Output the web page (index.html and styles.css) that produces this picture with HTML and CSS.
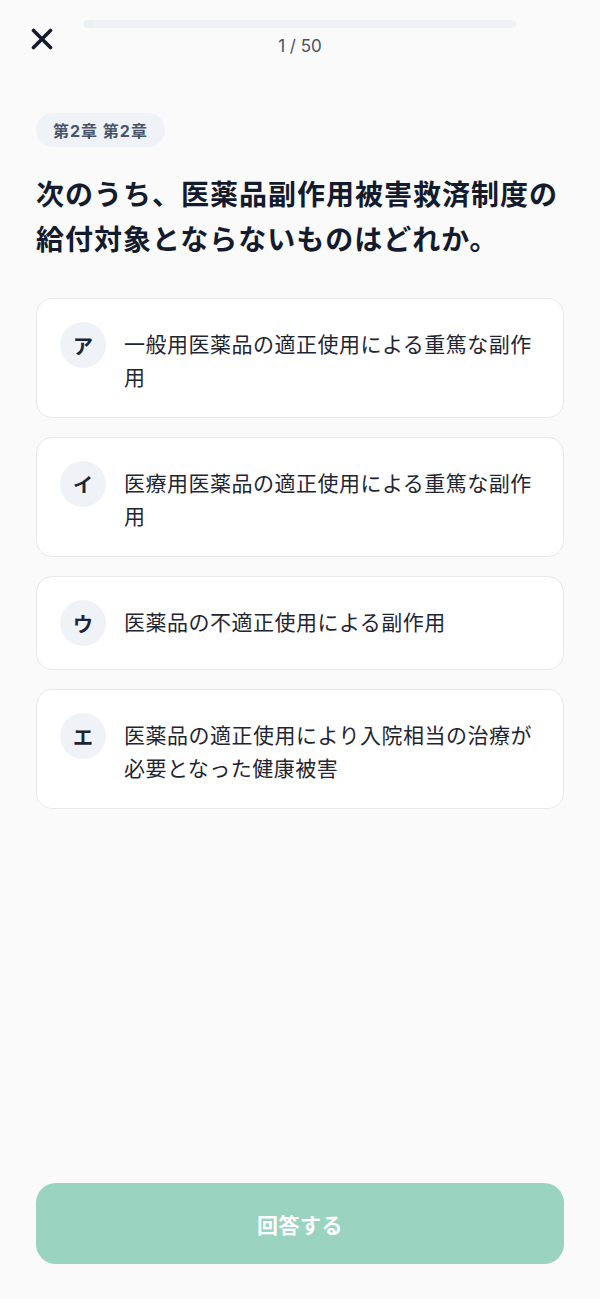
FILE: index.html
```html
<!DOCTYPE html>
<html lang="ja">
<head>
<meta charset="utf-8">
<meta name="viewport" content="width=device-width, initial-scale=1">
<title>Quiz</title>
<link rel="stylesheet" href="styles.css">
</head>
<body>
<div class="screen">
  <header class="topbar">
    <button class="close" aria-label="閉じる">
      <svg width="22" height="22" viewBox="0 0 22 22" aria-hidden="true">
        <path d="M2.5 2.5 L19.5 19.5 M19.5 2.5 L2.5 19.5" stroke="#141a2e" stroke-width="3.6" stroke-linecap="round" fill="none"/>
      </svg>
    </button>
    <div class="progress">
      <div class="track"><div class="fill" style="width:2%"></div></div>
      <div class="count">1 / 50</div>
    </div>
    <div class="spacer"></div>
  </header>

  <main class="content">
    <span class="chip">第2章 第2章</span>
    <h1 class="question">次のうち、医薬品副作用被害救済制度の給付対象とならないものはどれか。</h1>

    <ul class="options">
      <li class="option">
        <span class="badge">ア</span>
        <span class="text">一般用医薬品の適正使用による重篤な副作用</span>
      </li>
      <li class="option">
        <span class="badge">イ</span>
        <span class="text">医療用医薬品の適正使用による重篤な副作用</span>
      </li>
      <li class="option">
        <span class="badge">ウ</span>
        <span class="text">医薬品の不適正使用による副作用</span>
      </li>
      <li class="option">
        <span class="badge">エ</span>
        <span class="text">医薬品の適正使用により入院相当の治療が必要となった健康被害</span>
      </li>
    </ul>
  </main>

  <footer class="footer">
    <button class="submit" disabled>回答する</button>
  </footer>
</div>
</body>
</html>
```

FILE: styles.css
```css
* { box-sizing: border-box; }

html, body {
  margin: 0;
  padding: 0;
  background: #fafafa;
}

body {
  font-family: Inter, "Noto Sans CJK JP", sans-serif;
  color: #141b2d;
}

.screen {
  min-height: 1299px;
  display: flex;
  flex-direction: column;
}

.topbar {
  display: flex;
  align-items: center;
  gap: 30px;
  padding: 20px 30px 0;
}

.close {
  width: 24px;
  height: 24px;
  padding: 0;
  margin: 0;
  border: 0;
  background: none;
  display: flex;
  align-items: center;
  justify-content: center;
}

.spacer { width: 24px; }

.progress {
  flex: 1;
  display: flex;
  flex-direction: column;
  align-items: center;
}

.track {
  width: 100%;
  height: 8px;
  border-radius: 4px;
  background: #f0f2f5;
  overflow: hidden;
}

.fill {
  height: 100%;
  background: #eceff3;
}

.count {
  margin-top: 8px;
  font-family: Inter, sans-serif;
  font-size: 17px;
  line-height: 21px;
  color: #4b5160;
}

.content {
  flex: 1;
  padding: 56px 36px 0;
}

.chip {
  display: inline-flex;
  align-items: center;
  height: 34px;
  padding: 0 17px;
  border-radius: 17px;
  background: #eff3f7;
  font-size: 16px;
  font-weight: 700;
  letter-spacing: 1px;
  color: #4a5466;
}

.question {
  margin: 26px 0 0;
  font-size: 28px;
  line-height: 45px;
  font-weight: 700;
  letter-spacing: 1px;
  color: #141b2d;
}

.options {
  list-style: none;
  margin: 35px 0 0;
  padding: 0;
  display: flex;
  flex-direction: column;
  gap: 19px;
}

.option {
  display: flex;
  align-items: flex-start;
  gap: 18px;
  padding: 23px;
  background: #ffffff;
  border: 1px solid #e6e8ec;
  border-radius: 16px;
}

.badge {
  flex: none;
  width: 46px;
  height: 46px;
  border-radius: 50%;
  background: #eff3f8;
  display: flex;
  align-items: center;
  justify-content: center;
  font-size: 20px;
  font-weight: 700;
  color: #1c2436;
}

.text {
  flex: 1;
  margin-top: 6px;
  font-size: 21px;
  line-height: 33px;
  letter-spacing: 0.5px;
  color: #1f2533;
}

.footer {
  padding: 0 36px 35px;
}

.submit {
  width: 100%;
  height: 81px;
  border: 0;
  border-radius: 20px;
  background: #9ad3bf;
  color: #ffffff;
  font-family: "Noto Sans CJK JP", sans-serif;
  font-size: 21px;
  font-weight: 700;
  letter-spacing: 0.5px;
}
```
